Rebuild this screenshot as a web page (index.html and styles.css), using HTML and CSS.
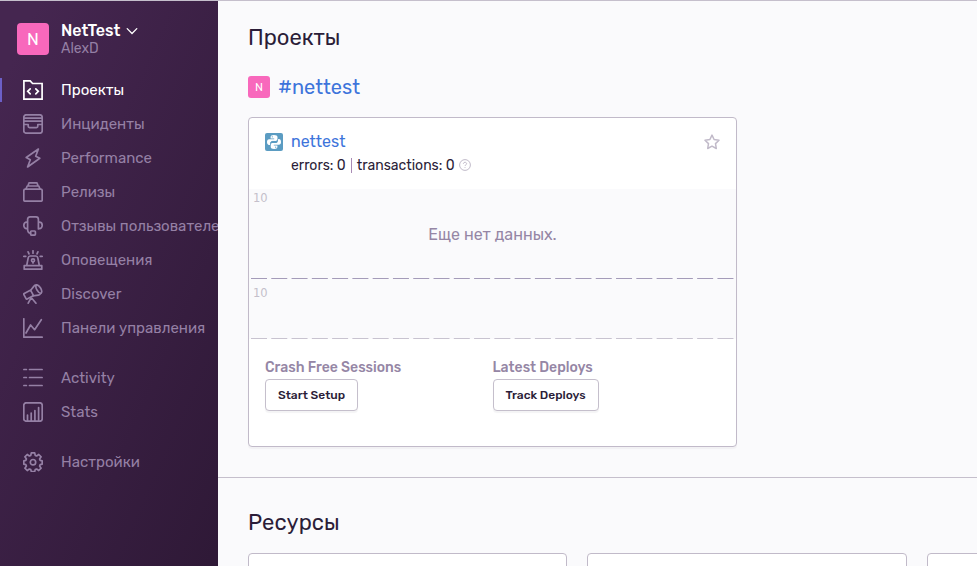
FILE: index.html
```
<!DOCTYPE html>
<html lang="ru">
<head>
<meta charset="utf-8">
<title>Проекты</title>
<link rel="stylesheet" href="styles.css">
</head>
<body>
<div class="app">
  <aside class="sidebar">
    <div class="org">
      <span class="avatar">N</span>
      <div class="org-text">
        <div class="org-name"><span>NetTest</span><svg class="chevron" viewBox="0 0 12 12"><path d="M1.200 3.600 6 8.500l4.800-4.900"/></svg></div>
        <div class="org-user">AlexD</div>
      </div>
    </div>
    <nav>
      <div class="nav-group">
        <a class="nav-item active"><svg class="icon" viewBox="0 0 20 20"><path stroke-linejoin="miter" d="M.9.9h6.300l2.400 2.600h9.500v15.600H.9zM7.200 8.800 4.700 11.300l2.500 2.500M12.800 8.800l2.500 2.500-2.500 2.500"/></svg><span>Проекты</span></a>
        <a class="nav-item"><svg class="icon" viewBox="0 0 20 20"><rect x=".8" y=".8" width="18.400" height="18.400" rx="2.400"/><path d="M1 4.200h18M1 7.200h18M1 10.500h4.200v1.800c0 .9.400 1.300 1.300 1.300h7c.9 0 1.300-.4 1.300-1.300v-1.800H19"/></svg><span>Инциденты</span></a>
        <a class="nav-item"><svg class="icon" viewBox="0 0 20 20"><path d="M15.400 1 3.200 9.500l4.100 2.200L4.600 19l12.200-8.700-4.100-2.100z"/></svg><span>Performance</span></a>
        <a class="nav-item"><svg class="icon" viewBox="0 0 20 20"><rect x=".8" y="7.200" width="18.400" height="12" rx="1.300"/><path d="M3 7l1.200-3h11.600L17 7M5 4l.7-2.500c.1-.4.4-.6.8-.6h7c.4 0 .7.200.8.6L15 4"/></svg><span>Релизы</span></a>
        <a class="nav-item"><svg class="icon" viewBox="0 0 20 20"><path d="M4.600 12.900V3.400C4.600 1.900 5.500.9 7 .9h6c1.500 0 2.400 1 2.400 2.500v9.500M4.600 6.200H3.700C1.900 6.200.8 7.700.8 9.400s1.100 3.300 2.900 3.300h.9M15.400 6.200h.9c1.800 0 2.900 1.500 2.900 3.200s-1.100 3.300-2.900 3.300h-.9M4.600 12.900c0 2.100.9 4.200 3 4.200"/><rect x="7.600" y="15" width="4.800" height="4.100" rx=".8"/></svg><span>Отзывы пользователей</span></a>
        <a class="nav-item"><svg class="icon" viewBox="0 0 20 20"><path d="M1.200 15.700h17.600v3.500H1.200zM3.700 15.500l1.500-7.700C5.400 6.600 6 6 7.200 6h5.600c1.200 0 1.800.6 2 1.800l1.500 7.700M10 .8v2.400M5.100 1.800l.9 2M14.900 1.800l-.9 2M.8 6.300h2M17.200 6.300h2M10 12v1"/><circle cx="10" cy="10.300" r="1.500"/></svg><span>Оповещения</span></a>
        <a class="nav-item"><svg class="icon" viewBox="0 0 20 20"><rect x="1.500" y="7.700" width="8" height="6.200" rx=".8" transform="rotate(-28 5.500 10.800)"/><path d="M7.500 6.500 11 2.100c.6-.8 1.500-1.100 2.400-.8M9.800 11.800l5.600-.6c.9-.1 1.700-.7 2.100-1.500M8.800 14.200 13 19.200M8 14.200 5.200 19.200"/><path d="M13.400.9c2.300-.6 6.800 5.500 4.800 8.200-2.400 1-6.800-5.700-4.800-8.200z"/></svg><span>Discover</span></a>
        <a class="nav-item"><svg class="icon" viewBox="0 0 20 20"><path d="M.8.8v18.400h18.400M3 15l4.600-8 4 4.700 6.700-10"/></svg><span>Панели управления</span></a>
      </div>
      <div class="nav-group">
        <a class="nav-item"><svg class="icon" viewBox="0 0 20 20"><path d="M.9 1.500h2.500M6.500 1.500h12.600M.9 9.500h2.500M6.500 9.500h12.600M.9 17.500h2.500M6.500 17.500h12.600"/></svg><span>Activity</span></a>
        <a class="nav-item"><svg class="icon" viewBox="0 0 20 20"><rect x=".8" y=".8" width="18.400" height="18.400" rx="2.400"/><path d="M4.500 13v6M8.200 11v8M11.900 8.500V19M15.600 5.500V19"/></svg><span>Stats</span></a>
      </div>
      <div class="nav-group">
        <a class="nav-item"><svg class="icon" viewBox="0 0 20 20"><path d="M8.300.9h3.400l.5 2.500 1.400.6 2.200-1.500 2.300 2.300-1.500 2.200.6 1.400 2 .5v3.200l-2 .5-.6 1.400 1.500 2.200-2.300 2.300-2.200-1.500-1.400.6-.5 2H8.300l-.5-2-1.400-.6-2.200 1.500-2.300-2.300 1.500-2.200-.6-1.400-2-.5V8.900l2-.5.6-1.400-1.500-2.200 2.300-2.300L6.400 4l1.400-.6z"/><circle cx="10" cy="10.200" r="2.700"/></svg><span>Настройки</span></a>
      </div>
    </nav>
  </aside>
  <main class="main">
    <section class="projects">
      <h1>Проекты</h1>
      <div class="team"><span class="avatar avatar-small">N</span><a>#nettest</a></div>
      <article class="card">
        <header class="card-head">
          <svg class="platform" viewBox="0 0 18 18"><rect width="18" height="18" rx="2" fill="#5b9cc2"/><path fill="#fff" d="M8.900 1.900c-2.200 0-3.300.7-3.300 2v1.700h3.600v.6H4.100C2.700 6.200 2 7.300 2 9s.7 2.900 2.100 2.900h1.200v-1.800c0-1.200 1-2.200 2.200-2.200h3.300c1 0 1.700-.8 1.700-1.700V3.900c0-1.300-1.300-2-3.600-2z"/><path fill="#fff" d="M9.100 16.100c2.200 0 3.300-.7 3.300-2v-1.700H8.800v-.6h5.100c1.400 0 2.100-1.100 2.100-2.800s-.7-2.900-2.100-2.900h-1v1.800c0 1.200-1 2.200-2.200 2.200H7.400c-1 0-1.700.8-1.700 1.700v2.300c0 1.300 1.200 2 3.400 2z"/><path d="M5.500 12.200v-1.800c0-1.300.8-2 2-2h3.200c1.200 0 2-.8 2-2V5.800" fill="none" stroke="#5b9cc2" stroke-width=".6"/><circle cx="7.300" cy="3.800" r=".6" fill="#5b9cc2"/><circle cx="10.700" cy="14.200" r=".6" fill="#5b9cc2"/></svg>
          <div class="card-title">
            <a class="project-name">nettest</a>
            <div class="counts"><span>errors: 0</span><i class="sep"></i><span>transactions: 0</span><svg class="help" viewBox="0 0 12 12"><circle cx="6" cy="6" r="5.400"/><path d="M4.400 4.800c0-2 3.200-2 3.200-.1 0 1.200-1.600 1.200-1.600 2.300M6 8.200v.8"/></svg></div>
          </div>
          <svg class="star" viewBox="0 0 16 16"><path d="M8 1.100 10.100 5.500l4.900.7-3.500 3.400.8 4.900L8 12.200l-4.300 2.300.8-4.900L1 6.200l4.900-.7z"/></svg>
        </header>
        <div class="chart chart-main"><span class="tick">10</span><p class="empty">Еще нет данных.</p><svg class="dashes"><line x1="0" y1=".5" x2="483" y2=".5"/></svg></div>
        <div class="chart chart-sub"><span class="tick">10</span><svg class="dashes light"><line x1="0" y1=".5" x2="483" y2=".5"/></svg></div>
        <footer class="card-foot">
          <div class="foot-col"><h2>Crash Free Sessions</h2><button>Start Setup</button></div>
          <div class="foot-col"><h2>Latest Deploys</h2><button>Track Deploys</button></div>
        </footer>
      </article>
    </section>
    <section class="resources">
      <h1>Ресурсы</h1>
      <div class="resource-row"><div class="resource"></div><div class="resource"></div><div class="resource"></div></div>
    </section>
  </main>
</div>
</body>
</html>
```
FILE: styles.css
```
* { box-sizing: border-box; }
body { margin: 0; height: 566px; overflow: hidden; font-family: Rubik, Roboto, sans-serif; color: #2b1d38; background: #fafafc; }
h1, h2, p { margin: 0; font-weight: 400; }
.app { display: flex; height: 566px; overflow: hidden; border-top: 1px solid #c5bfcc; }
.sidebar { width: 218px; flex: none; overflow: hidden; background: linear-gradient(294.17deg, #2f1937 2%, #452650 92%); color: #9580a5; }
.org { display: flex; height: 72px; padding: 22px 0 0 17px; gap: 12px; }
.avatar { display: flex; align-items: center; justify-content: center; width: 32px; height: 32px; flex: none; border-radius: 4px; background: #f868bc; color: #fff; font-size: 17px; }
.avatar-small { width: 22px; height: 22px; border-radius: 3px; font-size: 11.5px; }
.org-name { display: flex; align-items: center; height: 15px; font-size: 16px; font-weight: 500; color: #fff; }
.org-user { height: 18px; line-height: 21px; font-size: 14px; }
.chevron { width: 12px; height: 12px; margin-left: 6px; fill: none; stroke: #fff; stroke-width: 1.3; stroke-linecap: round; }
.nav-group { margin-bottom: 16px; }
.nav-item { display: flex; align-items: center; height: 34px; padding-left: 23px; gap: 18px; font-size: 15px; white-space: nowrap; }
.icon { width: 20px; height: 20px; flex: none; fill: none; stroke: currentColor; stroke-width: 1.7; stroke-linecap: round; stroke-linejoin: round; }
.active { color: #fff; background: linear-gradient(#6c5fc7, #6c5fc7) 0 5px / 2px 24px no-repeat; }
.main { flex: 1; min-width: 0; }
.projects { height: 477px; padding: 21px 30px 0; border-bottom: 1px solid #c5bfcc; }
h1 { height: 32px; line-height: 32px; font-size: 22px; }
.team { display: flex; align-items: center; height: 24px; margin-top: 21px; gap: 8px; font-size: 20px; color: #3d74db; }
.card { width: 489px; height: 330px; margin-top: 18px; border: 1px solid #c1bac9; border-radius: 4px; background: #fff; box-shadow: 0 2px 1px rgba(43, 34, 51, .04); }
.card-head { display: flex; height: 71px; padding: 15px 16px 0; }
.platform { width: 18px; height: 18px; }
.card-title { flex: 1; margin-left: 8px; }
.project-name { display: block; height: 18px; line-height: 18px; font-size: 16px; color: #3d74db; }
.counts { display: flex; align-items: center; height: 18px; margin-top: 5px; font-size: 14px; }
.sep { width: 1px; height: 15px; margin: 0 5px; background: #a98bb5; }
.help { width: 12px; height: 12px; margin-left: 4px; fill: none; stroke: #c1bac9; stroke-width: 1; }
.star { width: 16px; height: 16px; margin-top: 1px; fill: none; stroke: #c1bac9; stroke-width: 1.5; stroke-linejoin: round; }
.chart { display: flex; flex-direction: column; background: #fafafc; padding: 2px 2px 0; }
.chart-main { height: 90px; }
.chart-sub { height: 60px; padding-top: 7px; }
.tick { height: 14px; margin-left: 2px; line-height: 14px; font-family: "DejaVu Sans", sans-serif; font-size: 11.5px; color: #c4bfcb; }
.empty { margin-top: 19px; line-height: 22px; text-align: center; font-size: 16px; color: #9586a5; }
.dashes { width: 483px; height: 1px; margin-top: auto; stroke: #a49bb9; stroke-dasharray: 16 4.28; }
.light { stroke: #c8c3d0; }
.card-foot { display: flex; padding: 20px 16px 0; }
.foot-col { width: 228px; }
h2 { height: 18px; line-height: 18px; font-size: 14px; font-weight: 500; color: #9586a5; }
button { display: flex; align-items: center; height: 32px; margin-top: 2px; padding: 0 12px; border: 1px solid #c5bfcc; border-radius: 4px; background: #fff; box-shadow: 0 2px 1px rgba(43, 34, 51, .05); font: 500 12px Rubik, Roboto, sans-serif; color: #2b1d38; white-space: nowrap; }
.resources { padding: 29px 0 0 30px; }
.resource-row { display: flex; gap: 20px; margin-top: 14px; }
.resource { width: 319.4px; height: 100px; flex: none; border: 1px solid #c1bac9; border-radius: 4px; background: #fff; }
```
